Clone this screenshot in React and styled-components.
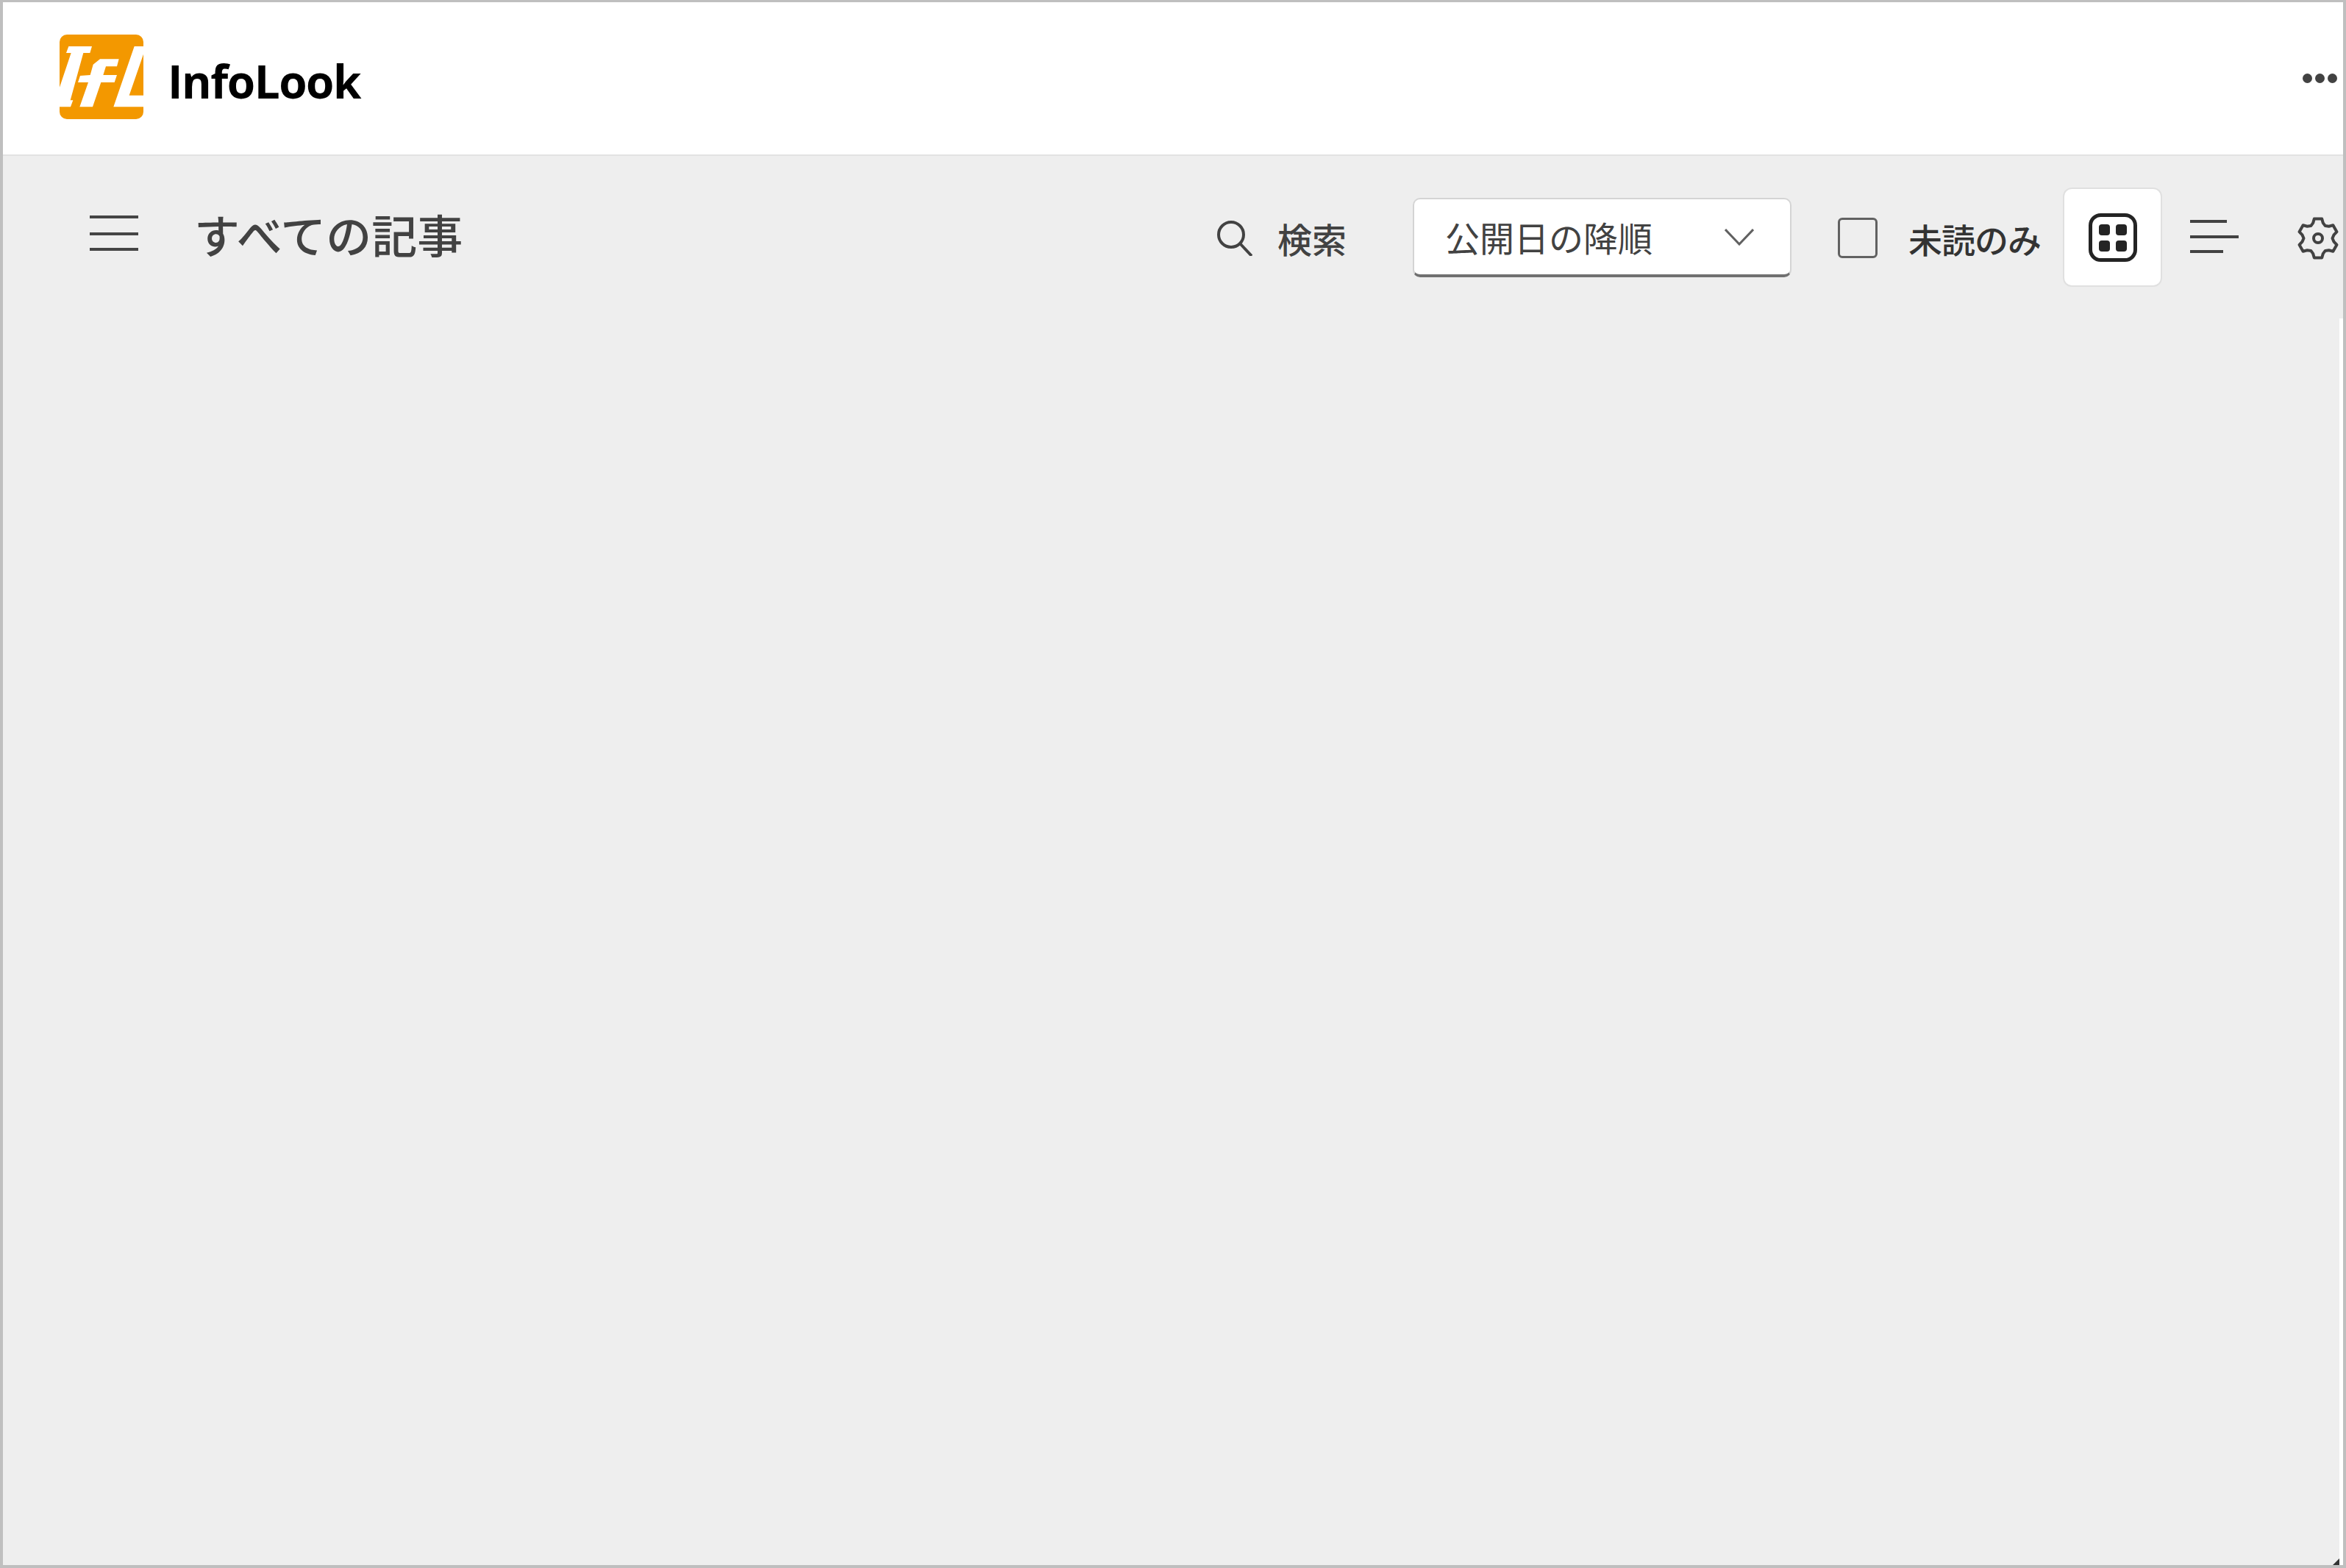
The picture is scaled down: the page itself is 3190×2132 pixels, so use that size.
import React from 'react';
import styled, { createGlobalStyle } from 'styled-components';

const GlobalStyle = createGlobalStyle`
  html, body {
    margin: 0;
    padding: 0;
    background: #ffffff;
  }
  body {
    font-family: 'Noto Sans CJK JP', 'Open Sans', sans-serif;
  }
`;

const Frame = styled.div`
  position: relative;
  box-sizing: border-box;
  width: 3190px;
  height: 2132px;
  border: 4px solid #bfbfbf;
  border-top-width: 3px;
  display: flex;
  flex-direction: column;
  background: #eeeeee;
  overflow: hidden;
`;

const Header = styled.header`
  box-sizing: border-box;
  height: 209px;
  flex: none;
  display: flex;
  align-items: flex-start;
  background: #ffffff;
  border-bottom: 2px solid #e2e2e2;
  padding: 44px 8px 0 77px;
`;

const Logo = styled.svg`
  width: 114px;
  height: 115px;
  flex: none;
`;

const Brand = styled.div`
  margin: 21px 0 0 33px;
  font-family: 'Open Sans', sans-serif;
  font-weight: 700;
  font-size: 62px;
  line-height: 84px;
  letter-spacing: -1.5px;
  color: #000000;
`;

const MoreDots = styled.div`
  margin: 53px 0 0 auto;
  display: flex;
  gap: 4px;
`;

const Dot = styled.span`
  width: 13px;
  height: 13px;
  border-radius: 50%;
  background: #424242;
`;

const Body = styled.main`
  flex: 1;
  display: flex;
  flex-direction: column;
`;

const Toolbar = styled.div`
  box-sizing: border-box;
  height: 221px;
  flex: none;
  display: flex;
  align-items: flex-start;
  padding: 43px 5px 0 118px;
  color: #424242;
`;

const Content = styled.div`
  flex: 1;
  border-right: 5px solid #ffffff;
`;

const MenuGlyph = styled.svg`
  margin-top: 37px;
  flex: none;
`;

const Title = styled.h1`
  margin: 20px 0 0 76px;
  font-size: 62px;
  font-weight: 500;
  line-height: 86px;
  color: #424242;
`;

const Label = styled.span`
  font-size: 47px;
  font-weight: ${p => (p.$strong ? 500 : 400)};
  line-height: 66px;
  color: ${p => p.$color || '#424242'};
`;

const Tools = styled.div`
  margin-left: auto;
  display: flex;
  align-items: flex-start;
`;

const SearchBox = styled.div`
  margin-top: 36px;
  display: flex;
  align-items: center;
  gap: 34px;
`;

const Select = styled.div`
  box-sizing: border-box;
  width: 515px;
  height: 108px;
  margin: 14px 0 0 90px;
  padding: 0 49px 0 42px;
  display: flex;
  align-items: center;
  justify-content: space-between;
  background: #ffffff;
  border: 2px solid #d4d4d4;
  border-bottom: 4px solid #707070;
  border-radius: 10px;
`;

const Check = styled.span`
  box-sizing: border-box;
  width: 54px;
  height: 55px;
  margin: 41px 42px 0 63px;
  border: 3px solid #616161;
  border-radius: 6px;
`;

const Unread = styled(Label)`
  margin-top: 36px;
  font-size: 46px;
  letter-spacing: -1px;
`;

const ViewGroup = styled.div`
  display: flex;
  gap: 3px;
  margin-left: 30px;
`;

const ViewButton = styled.button`
  box-sizing: border-box;
  width: 135px;
  height: 135px;
  padding: 0;
  display: flex;
  align-items: center;
  justify-content: center;
  background: ${p => (p.$active ? '#ffffff' : 'transparent')};
  border: 2px solid ${p => (p.$active ? '#e0e0e0' : 'transparent')};
  border-radius: 12px;
`;

const GearGlyph = styled.svg`
  margin: 40px 0 0 45px;
  flex: none;
`;

const GripMark = styled.svg`
  position: absolute;
  right: 5px;
  bottom: 0;
  width: 9px;
  height: 9px;
`;

const LogoMark = () => (
  <Logo viewBox="63 50 342 345">
    <rect x="63" y="50" width="342" height="345" rx="30" fill="#f39800" />
    <g fill="#ffffff">
      <polygon points="100,98 195,98 187,125 160,125 107,318 118,318 108,345 63,345 63,265 110,125 90,125" />
      <polygon points="228,150 305,150 297,180 252,180 241,215 297,215 287,245 232,245 198,345 145,345 180,245 138,245 147,218 188,215 200,172" />
      <polygon points="368,98 405,98 405,130 347,298 405,298 405,345 283,345" />
    </g>
  </Logo>
);

const MenuIcon = () => (
  <MenuGlyph width="66" height="50" viewBox="0 0 66 50" stroke="#444444" strokeWidth="4" fill="none">
    <path d="M0 3h66M0 26h66M0 47h66" />
  </MenuGlyph>
);

const SearchIcon = () => (
  <svg width="48" height="48" viewBox="0 0 48 48" stroke="#424242" strokeWidth="4" fill="none">
    <circle cx="19" cy="19" r="17" />
    <path d="M31 31l16 17" />
  </svg>
);

const Chevron = () => (
  <svg width="40" height="23" viewBox="0 0 40 23" stroke="#616161" strokeWidth="3" fill="none">
    <path d="M1 1l19 20L39 1" />
  </svg>
);

const GridIcon = () => (
  <svg width="66" height="66" viewBox="0 0 66 66">
    <rect x="2.5" y="2.5" width="61" height="61" rx="14" fill="none" stroke="#242424" strokeWidth="5" />
    <rect x="14" y="15" width="15" height="15" rx="4" fill="#242424" />
    <rect x="37" y="15" width="15" height="15" rx="4" fill="#242424" />
    <rect x="14" y="37" width="15" height="15" rx="4" fill="#242424" />
    <rect x="37" y="37" width="15" height="15" rx="4" fill="#242424" />
  </svg>
);

const ListIcon = () => (
  <svg width="66" height="50" viewBox="0 0 66 50" stroke="#424242" strokeWidth="4" fill="none">
    <path d="M0 3h50M0 24h66M0 44h45" />
  </svg>
);

// six flat teeth, one straight up, valleys at 3 and 9 o'clock
const gearPoints = [0, 60, 120, 180, 240, 300]
  .flatMap(a => [[19.5, a - 30], [22, a - 18], [27, a - 11], [27, a + 11], [22, a + 18]])
  .map(([r, a]) => {
    const t = (a * Math.PI) / 180;
    return `${(29 + r * Math.sin(t)).toFixed(1)},${(29 - r * Math.cos(t)).toFixed(1)}`;
  })
  .join(' ');

const GearIcon = () => (
  <GearGlyph width="58" height="58" viewBox="0 0 58 58" stroke="#424242" strokeWidth="4" strokeLinejoin="round" fill="none">
    <polygon points={gearPoints} />
    <circle cx="29" cy="29" r="6" />
  </GearGlyph>
);

export default function App() {
  return (
    <>
      <GlobalStyle />
      <Frame>
        <Header>
          <LogoMark />
          <Brand>InfoLook</Brand>
          <MoreDots>
            <Dot />
            <Dot />
            <Dot />
          </MoreDots>
        </Header>
        <Body>
          <Toolbar>
            <MenuIcon />
            <Title>すべての記事</Title>
            <Tools>
              <SearchBox>
                <SearchIcon />
                <Label $strong>検索</Label>
              </SearchBox>
              <Select>
                <Label>公開日の降順</Label>
                <Chevron />
              </Select>
              <Check />
              <Unread $strong $color="#333333">未読のみ</Unread>
              <ViewGroup>
                <ViewButton $active>
                  <GridIcon />
                </ViewButton>
                <ViewButton>
                  <ListIcon />
                </ViewButton>
              </ViewGroup>
              <GearIcon />
            </Tools>
          </Toolbar>
          <Content />
        </Body>
        <GripMark viewBox="0 0 9 9">
          <path d="M9 0v9H0z" fill="#333333" />
        </GripMark>
      </Frame>
    </>
  );
}
